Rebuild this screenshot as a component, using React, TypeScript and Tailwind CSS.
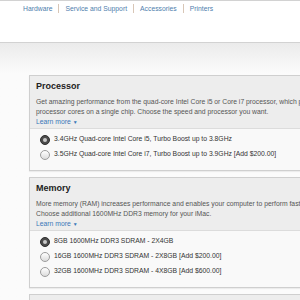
const navItems = ["Hardware", "Service and Support", "Accessories", "Printers"];

type Option = { label: string; checked?: boolean };

const sections: {
  title: string;
  lines: string[];
  options: Option[];
}[] = [
  {
    title: "Processor",
    lines: [
      "Get amazing performance from the quad-core Intel Core i5 or Core i7 processor, which puts four",
      "processor cores on a single chip. Choose the speed and processor you want.",
    ],
    options: [
      { label: "3.4GHz Quad-core Intel Core i5, Turbo Boost up to 3.8GHz", checked: true },
      { label: "3.5GHz Quad-core Intel Core i7, Turbo Boost up to 3.9GHz [Add $200.00]" },
    ],
  },
  {
    title: "Memory",
    lines: [
      "More memory (RAM) increases performance and enables your computer to perform faster",
      "Choose additional 1600MHz DDR3 memory for your iMac.",
    ],
    options: [
      { label: "8GB 1600MHz DDR3 SDRAM - 2X4GB", checked: true },
      { label: "16GB 1600MHz DDR3 SDRAM - 2X8GB [Add $200.00]" },
      { label: "32GB 1600MHz DDR3 SDRAM - 4X8GB [Add $600.00]" },
    ],
  },
];

const Radio = ({ checked }: { checked?: boolean }) =>
  checked ? (
    <span className="flex h-[10px] w-[10px] shrink-0 items-center justify-center rounded-full border border-[#2e2e2e] bg-[#4b4b4b]">
      <span className="h-[4px] w-[4px] rounded-full bg-[#c9c9c9]" />
    </span>
  ) : (
    <span className="h-[10px] w-[10px] shrink-0 rounded-full border border-[#9c9c9c] bg-gradient-to-b from-[#ffffff] to-[#dcdcdc]" />
  );

const App = () => {
  return (
    <div className="h-[300px] w-[300px] overflow-hidden bg-[#fbfbfb] font-['Liberation_Sans',Arial,sans-serif]">
      <nav className="flex h-[43px] items-start border-t border-b border-[#d2d2d2] bg-white pl-[23px] pt-[3px] text-[6.8px] leading-[9px] text-[#4f80ad]">
        {navItems.map((item, i) => (
          <div key={item} className="flex items-center">
            {i > 0 && <span className="mx-[6px] h-[9px] w-px bg-[#d8c6b6]" />}
            <span>{item}</span>
          </div>
        ))}
      </nav>
      <main className="flex flex-col gap-[6px] bg-gradient-to-b from-[#ebebeb] to-[#fbfbfb] to-[30px] pl-[29px] pt-[32px]">
        {sections.map((s) => (
          <section
            key={s.title}
            className="w-[320px] border border-[#cfcfcf] bg-[#f9f9f9] shadow-[0_1px_1px_rgba(0,0,0,0.06)]"
          >
            <div className="border-b border-[#dcdcdc] bg-[#ededed] pb-[1px] pl-[6px] pt-[4px]">
              <h2 className="text-[9px] font-bold leading-[12px] text-[#222]">{s.title}</h2>
              <div className="mt-[5px] text-[6.8px] leading-[10px] text-[#555]">
                {s.lines.map((l) => (
                  <p key={l} className="whitespace-nowrap">
                    {l}
                  </p>
                ))}
                <p className="text-[#3b78b8]">
                  Learn more <span className="text-[5px]">▼</span>
                </p>
              </div>
            </div>
            <ul className="flex flex-col pb-[8px] pl-[10px] pt-[3px]">
              {s.options.map((o) => (
                <li key={o.label} className="flex h-[15px] items-center gap-[4px] whitespace-nowrap text-[6.8px] text-[#333]">
                  <Radio checked={o.checked} />
                  <span>{o.label}</span>
                </li>
              ))}
            </ul>
          </section>
        ))}
        <section className="h-[20px] w-[320px] border border-[#cfcfcf] bg-[#ededed]" />
      </main>
    </div>
  );
};

export default App;
